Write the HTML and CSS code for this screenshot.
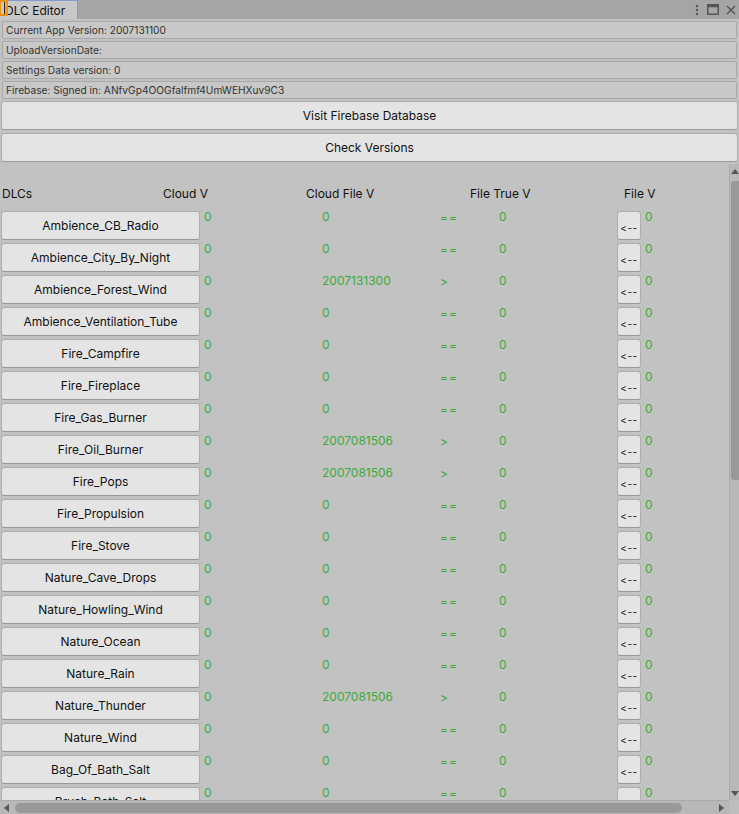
FILE: index.html
```html
<!DOCTYPE html>
<html>
<head>
<meta charset="utf-8">
<link rel="stylesheet" href="styles.css">
</head>
<body>
<div class="window">
  <div class="tabbar">
    <div class="tab"><span class="focus-mark"></span><span class="tab-title">DLC Editor</span></div>
    <div class="tab-tools">
      <svg class="ico" width="6" height="12" viewBox="0 0 6 12"><circle cx="3" cy="2" r="1.2" fill="#555"/><circle cx="3" cy="6" r="1.2" fill="#555"/><circle cx="3" cy="10" r="1.2" fill="#555"/></svg>
      <svg class="ico" width="12" height="11" viewBox="0 0 12 11"><rect x="0.75" y="0.75" width="10.5" height="9.5" fill="none" stroke="#555" stroke-width="1.5"/><rect x="0.75" y="0.75" width="10.5" height="2.5" fill="#555"/></svg>
      <svg class="ico" width="10" height="10" viewBox="0 0 10 10"><path d="M1 1 L9 9 M9 1 L1 9" stroke="#555" stroke-width="1.4"/></svg>
    </div>
  </div>

  <div class="info">Current App Version: 2007131100</div>
  <div class="info">UploadVersionDate:</div>
  <div class="info">Settings Data version: 0</div>
  <div class="info">Firebase: Signed in: ANfvGp4OOGfalfmf4UmWEHXuv9C3</div>

  <div class="wide-btn first">Visit Firebase Database</div>
  <div class="wide-btn">Check Versions</div>

  <div class="scroll-area">
    <div class="scroll-main">
      <div class="content">
        <div class="head-row">
          <span>DLCs</span><span>Cloud V</span><span>Cloud File V</span><span>File True V</span><span>File V</span>
        </div>
        <div id="rows"></div>
      </div>
      <div class="vscroll">
        <svg class="arrow-up" width="8" height="5" viewBox="0 0 8 5"><path d="M0 5 L4 0 L8 5Z" fill="#555"/></svg>
        <div class="vthumb"></div>
        <svg class="arrow-down" width="8" height="5" viewBox="0 0 8 5"><path d="M0 0 L4 5 L8 0Z" fill="#555"/></svg>
      </div>
    </div>
    <div class="hscroll">
      <svg class="harrow" width="5" height="8" viewBox="0 0 5 8"><path d="M5 0 L0 4 L5 8Z" fill="#555"/></svg>
      <div class="hthumb"></div>
      <svg class="harrow right" width="5" height="8" viewBox="0 0 5 8"><path d="M0 0 L5 4 L0 8Z" fill="#555"/></svg>
      <div class="corner"></div>
    </div>
  </div>
</div>
<script src="app.js"></script>
</body>
</html>
```

FILE: app.js
```js
const data = [
  ["Ambience_CB_Radio", "0", "=="],
  ["Ambience_City_By_Night", "0", "=="],
  ["Ambience_Forest_Wind", "2007131300", ">"],
  ["Ambience_Ventilation_Tube", "0", "=="],
  ["Fire_Campfire", "0", "=="],
  ["Fire_Fireplace", "0", "=="],
  ["Fire_Gas_Burner", "0", "=="],
  ["Fire_Oil_Burner", "2007081506", ">"],
  ["Fire_Pops", "2007081506", ">"],
  ["Fire_Propulsion", "0", "=="],
  ["Fire_Stove", "0", "=="],
  ["Nature_Cave_Drops", "0", "=="],
  ["Nature_Howling_Wind", "0", "=="],
  ["Nature_Ocean", "0", "=="],
  ["Nature_Rain", "0", "=="],
  ["Nature_Thunder", "2007081506", ">"],
  ["Nature_Wind", "0", "=="],
  ["Bag_Of_Bath_Salt", "0", "=="],
  ["Brush_Bath_Salt", "0", "=="]
];
const rows = document.getElementById("rows");
for (const [name, cloudFile, cmp] of data) {
  const r = document.createElement("div");
  r.className = "row";
  r.innerHTML =
    '<div class="dlc-btn">' + name + '</div>' +
    '<span class="val">0</span>' +
    '<span class="val">' + cloudFile + '</span>' +
    '<span class="val cmp">' + cmp + '</span>' +
    '<span class="val">0</span>' +
    '<div class="back-btn">&lt;--</div>' +
    '<span class="val">0</span>';
  rows.appendChild(r);
}
```

FILE: styles.css
```css
* { box-sizing: border-box; }
html, body { margin: 0; padding: 0; }
body {
  width: 739px;
  height: 814px;
  overflow: hidden;
  background: #c2c2c2;
  font-family: Inter, "Noto Sans", sans-serif;
  font-feature-settings: "calt" 0, "liga" 0;
  color: #111;
}
.window { display: flex; flex-direction: column; height: 814px; }

.tabbar {
  height: 19px;
  background: #a5a5a5;
  display: flex;
  align-items: stretch;
  justify-content: space-between;
  flex-shrink: 0;
}
.tab {
  width: 78px;
  background: #c8c8c8;
  display: flex;
  align-items: center;
  border-top: 1px solid #7f9ccf;
  border-right: 1px solid #999;
  position: relative;
}
.focus-mark {
  position: absolute;
  left: 0; top: -1px;
  width: 8px; height: 16px;
  border: 2px solid #f0900a;
  border-left-width: 1px;
  background: linear-gradient(90deg, transparent 3px, #222 3px, #222 4px, transparent 4px);
}
.tab-title { font-size: 12px; margin-left: 5px; color: #111; }
.tab-tools { display: flex; align-items: center; gap: 7px; padding-right: 3px; }
.ico { display: block; }

.info {
  margin: 2px 2px 0 2px;
  height: 18px;
  border: 1px solid #a8a8a8;
  border-radius: 2px;
  background: #c8c8c8;
  font-size: 10.2px;
  color: #333;
  padding-left: 3px;
  display: flex;
  align-items: center;
}
.info:first-of-type { margin-top: 1px; }

.wide-btn {
  margin: 3px 1px 0 1px;
  height: 29px;
  background: #e4e4e4;
  border: 1px solid #adadad;
  border-bottom-color: #999;
  border-radius: 3px;
  display: flex;
  align-items: center;
  justify-content: center;
  font-size: 12px;
  color: #111;
  flex-shrink: 0;
}
.wide-btn.first { margin-top: 2px; }

.scroll-area {
  flex: 1;
  display: flex;
  flex-direction: column;
  margin-top: 2px;
  min-height: 0;
}
.scroll-main { flex: 1; display: flex; min-height: 0; }
.content { flex: 1; overflow: hidden; padding-top: 21px; }

.head-row {
  display: grid;
  grid-template-columns: 161px 143px 164px 154px auto;
  padding-left: 2px;
  font-size: 12px;
  height: 17px;
  align-items: center;
  margin-bottom: 9px;
}

.row {
  display: grid;
  grid-template-columns: 203px 118px 118px 59px 118px 28px auto;
  padding-left: 1px;
  height: 32px;
  align-items: start;
}
.dlc-btn {
  width: 199px;
  height: 29px;
  background: #e4e4e4;
  border: 1px solid #adadad;
  border-bottom-color: #999;
  border-radius: 3px;
  display: flex;
  align-items: center;
  justify-content: center;
  font-size: 12px;
  color: #111;
}
.val {
  font-size: 12px;
  color: #3aaa3a;
  line-height: 14px;
  margin-top: -1px;
}
.cmp { letter-spacing: 1px; font-size: 12px; margin-top: 0; }
.back-btn {
  width: 24px;
  height: 29px;
  background: #e4e4e4;
  border: 1px solid #adadad;
  border-bottom-color: #999;
  border-radius: 3px;
  display: flex;
  align-items: center;
  justify-content: center;
  font-size: 10px;
  letter-spacing: 0.5px;
  padding-top: 4px;
  color: #111;
}

.vscroll {
  width: 10px;
  background: #b8b8b8;
  border-left: 1px solid #aaa;
  position: relative;
}
.arrow-up { position: absolute; left: 1px; top: 5px; }
.arrow-down { position: absolute; left: 1px; bottom: 4px; }
.vthumb {
  position: absolute;
  left: 1px; right: 0;
  top: 17px; height: 299px;
  background: #999;
  border-radius: 3px 0 0 3px;
}

.hscroll {
  height: 14px;
  background: #b8b8b8;
  border-top: 1px solid #aaa;
  display: flex;
  align-items: center;
  position: relative;
  flex-shrink: 0;
}
.harrow { position: absolute; left: 4px; top: 3px; }
.harrow.right { left: 719px; }
.hthumb {
  position: absolute;
  left: 15px; width: 667px;
  top: 2px; height: 10px;
  background: #999;
  border-radius: 5px;
}
.corner {
  position: absolute;
  right: 0; top: -1px;
  width: 10px; height: 15px;
  background: #bdbdbd;
}
```
